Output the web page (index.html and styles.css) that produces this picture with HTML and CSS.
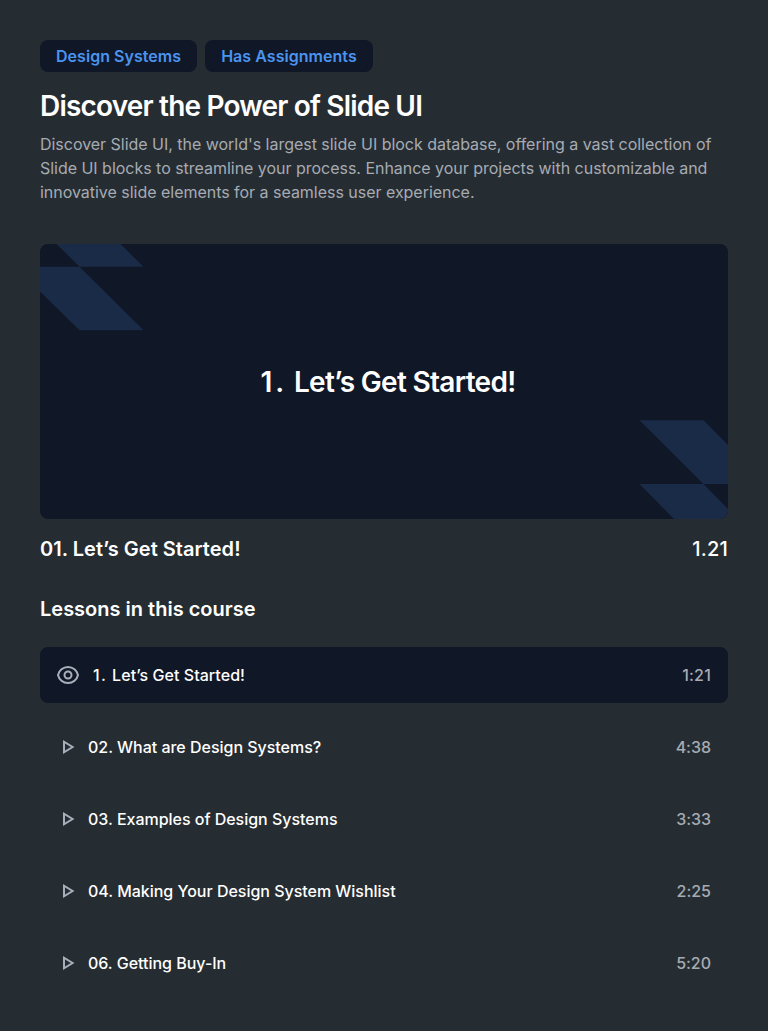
FILE: index.html
```html
<!DOCTYPE html>
<html lang="en">
<head>
<meta charset="utf-8">
<title>Discover the Power of Slide UI</title>
<link rel="stylesheet" href="styles.css">
</head>
<body>
<main class="course">
  <header class="intro">
    <div class="tags"><span class="tag">Design Systems</span><span class="tag">Has Assignments</span></div>
    <h1 class="title">Discover the Power of Slide UI</h1>
    <p class="description">Discover Slide UI, the world's largest slide UI block database, offering a vast collection of Slide UI blocks to streamline your process. Enhance your projects with customizable and innovative slide elements for a seamless user experience.</p>
  </header>
  <section class="preview">
    <svg class="preview-art" viewBox="0 0 688 275" aria-hidden="true">
      <path d="M16.500 0H80.500L103.500 22.700H39.500ZM0 22.700H39.500L103.500 86.300H39.500L0 47.500Z"/>
      <path d="M599.500 176.300H663.500L688 201V240H663.500ZM599.500 240H663.500L688 265V275H634Z"/>
    </svg>
    <p class="preview-title"><span class="preview-number">1.</span><span>Let’s Get Started!</span></p>
  </section>
  <div class="current"><span>01. Let’s Get Started!</span><span class="current-time">1.21</span></div>
  <h2 class="subtitle">Lessons in this course</h2>
  <ul class="lessons">
    <li class="lesson lesson-active"><svg class="icon" viewBox="0 0 24 24"><path d="M2 12C3 7.500 7 4 12 4s9 3.500 10 8c-1 4.500-5 8-10 8S3 16.500 2 12Z"/><circle cx="12" cy="12" r="3.500"/></svg><span class="name"><span class="number">1.</span>Let’s Get Started!</span><span class="time">1:21</span></li>
    <li class="lesson"><svg class="icon" viewBox="0 0 24 24"><path d="M8 6.700v10.600l8.600-5.300z"/></svg><span class="name">02. What are Design Systems?</span><span class="time">4:38</span></li>
    <li class="lesson"><svg class="icon" viewBox="0 0 24 24"><path d="M8 6.700v10.600l8.600-5.300z"/></svg><span class="name">03. Examples of Design Systems</span><span class="time">3:33</span></li>
    <li class="lesson"><svg class="icon" viewBox="0 0 24 24"><path d="M8 6.700v10.600l8.600-5.300z"/></svg><span class="name">04. Making Your Design System Wishlist</span><span class="time">2:25</span></li>
    <li class="lesson"><svg class="icon" viewBox="0 0 24 24"><path d="M8 6.700v10.600l8.600-5.300z"/></svg><span class="name">06. Getting Buy-In</span><span class="time">5:20</span></li>
  </ul>
</main>
</body>
</html>
```
FILE: styles.css
```css
* { box-sizing: border-box; margin: 0; padding: 0; }
body { background: #262d32; color: #fff; font-family: Inter, "Liberation Sans", sans-serif; font-size: 16px; line-height: 24px; }
.course { padding: 40px; height: 1031px; }
.tags { display: flex; gap: 8px; }
.tag { height: 32px; padding: 4px 16px; border-radius: 8px; background: #101726; color: #4a94f0; font-weight: 600; letter-spacing: 0.04px; }
.title { margin-top: 16px; font-size: 28px; line-height: 36px; font-weight: 600; letter-spacing: -0.82px; }
.description { margin-top: 8px; color: #a6abb3; letter-spacing: -0.025px; }
.preview { display: grid; place-items: center; height: 275px; margin-top: 40px; border-radius: 8px; overflow: hidden; background: #101726; }
.preview-art { grid-area: 1 / 1; width: 688px; height: 275px; fill: #1a2b47; }
.preview-title { grid-area: 1 / 1; display: flex; gap: 7px; padding-left: 8px; font-size: 28px; line-height: 36px; font-weight: 600; letter-spacing: -0.7px; }
.preview-number { letter-spacing: 2.8px; }
.current { display: flex; justify-content: space-between; margin-top: 16px; font-size: 20px; line-height: 28px; font-weight: 600; letter-spacing: 0.03px; }
.current-time { font-weight: 500; letter-spacing: 0.2px; }
.subtitle { margin-top: 32px; font-size: 20px; line-height: 28px; font-weight: 600; }
.lessons { display: flex; flex-direction: column; gap: 16px; margin-top: 24px; list-style: none; }
.lesson { display: flex; align-items: center; height: 56px; padding: 0 16px; border-radius: 8px; font-weight: 500; letter-spacing: -0.02px; }
.lesson-active { background: #101726; }
.icon { width: 24px; height: 24px; fill: none; stroke: #a9afba; stroke-width: 2; }
.name { margin-left: 8px; }
.lesson-active .name { margin-left: 13px; letter-spacing: 0.05px; }
.number { margin-right: 5px; letter-spacing: 1.3px; }
.time { margin-left: auto; padding-right: 1px; color: #a6abb3; }
.lesson-active .time { letter-spacing: 0.2px; }
```
